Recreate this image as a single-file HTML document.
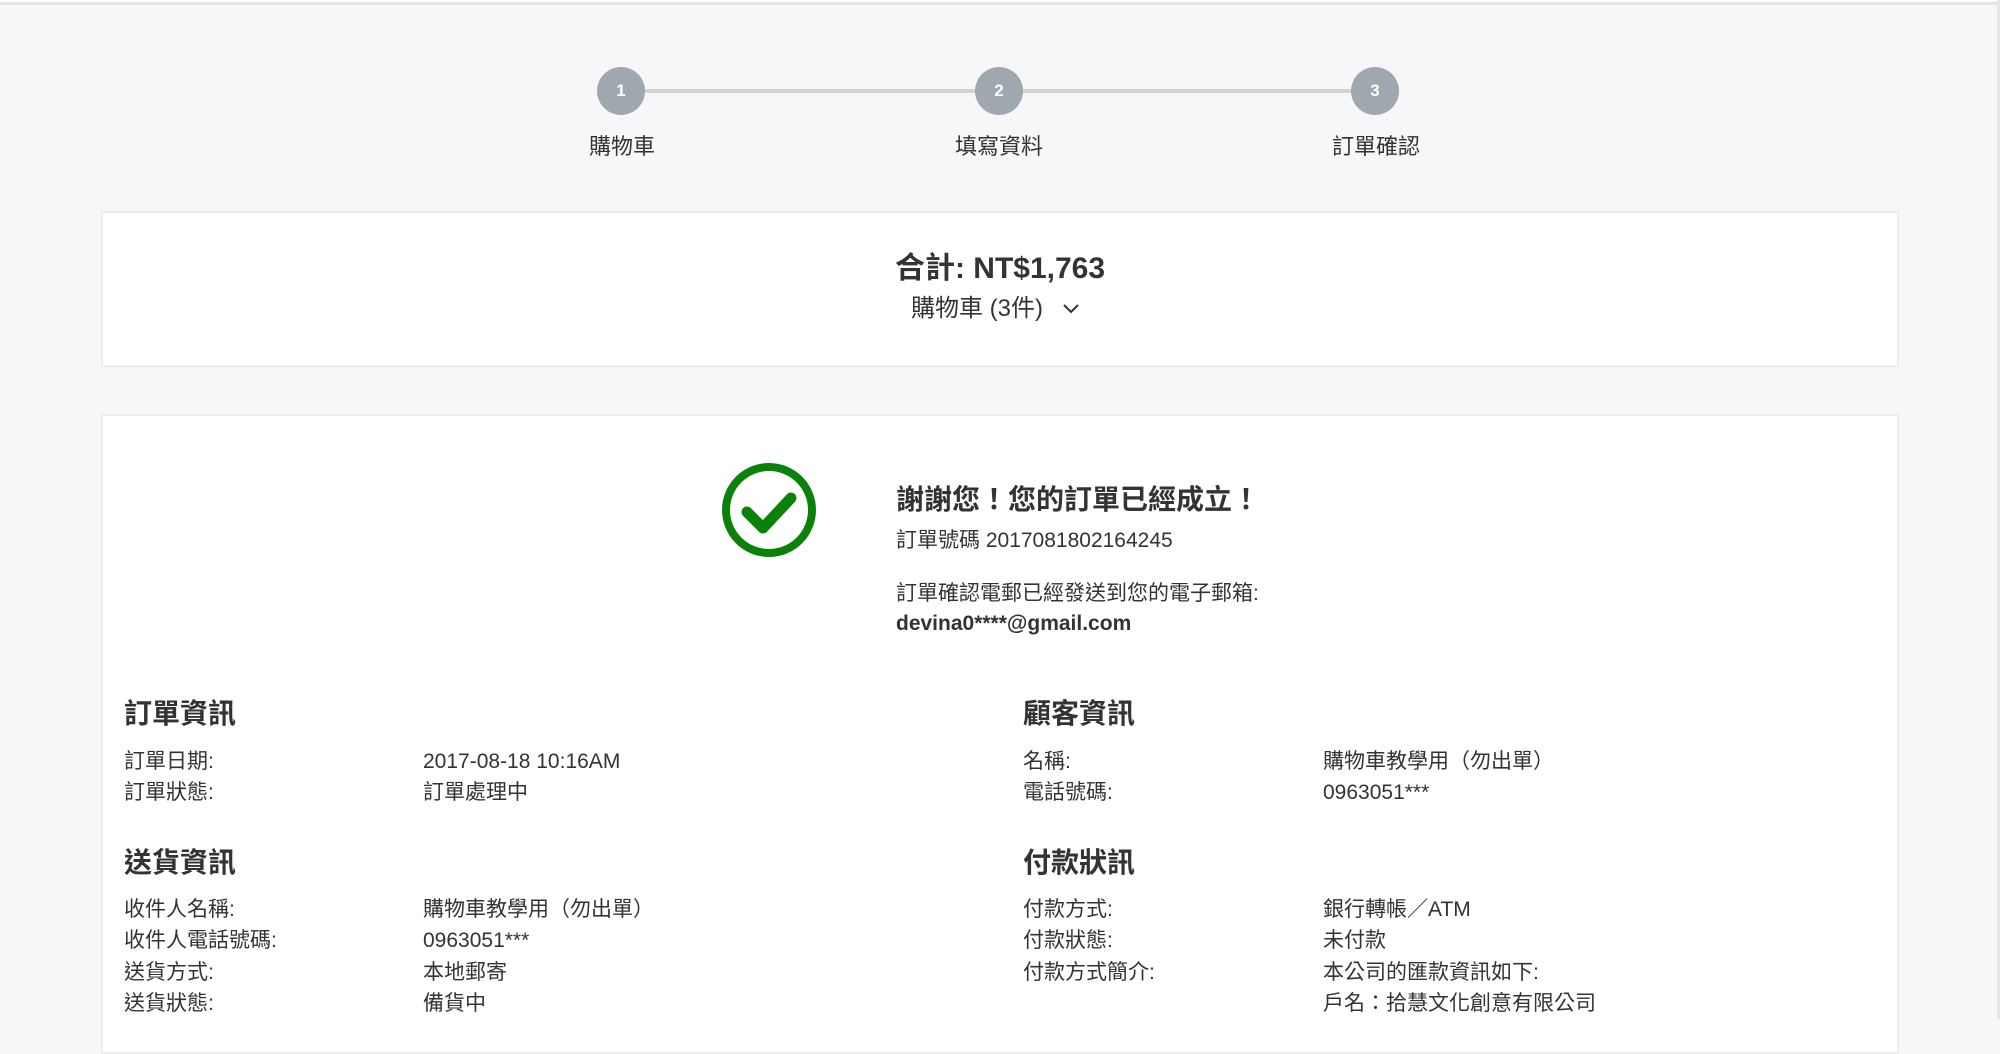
<!DOCTYPE html>
<html><head><meta charset="utf-8"><style>
*{margin:0;padding:0;box-sizing:border-box}
body{width:2000px;height:1019px;overflow:hidden;background:#f7f7f9;font-family:"Liberation Sans","Noto Sans CJK TC",sans-serif;color:#333;position:relative}
.a{position:absolute;white-space:nowrap;line-height:1}
.topl{position:absolute;left:0;top:0;width:2000px;height:5px;border-bottom:3px solid #e4e4e6;background:#fff}
.rl{position:absolute;right:0;top:0;width:3px;height:1019px;background:#e6e6e8}
.line{position:absolute;top:89px;height:4px;background:#d3d3d3}
.c{position:absolute;width:48px;height:48px;border-radius:50%;background:#9ea8ae;color:#fff;font-weight:bold;font-size:17px;text-align:center;line-height:48px;top:67px}
.lab{font-size:22px;top:136px;transform:translateX(-50%)}
.card{position:absolute;left:101px;width:1798px;background:#fff;border:2px solid #ececee}
.l{font-size:21px}
.h{font-size:28px;font-weight:bold}
</style></head><body>
<div class="topl"></div><div class="rl"></div>
<div class="line" style="left:621px;width:754px"></div>
<div class="c" style="left:597px">1</div>
<div class="c" style="left:975px">2</div>
<div class="c" style="left:1351px">3</div>
<div class="a lab" style="left:622px">購物車</div>
<div class="a lab" style="left:999px">填寫資料</div>
<div class="a lab" style="left:1376px">訂單確認</div>

<div class="card" style="top:211px;height:156px"></div>
<div class="a" style="left:0;width:2000px;text-align:center;top:254px;font-size:30px;font-weight:bold">合計: NT$1,763</div>
<div class="a" style="left:911px;top:297px;font-size:24px">購物車 (3件)</div>
<svg class="a" style="left:1062px;top:303px" width="18" height="12" viewBox="0 0 18 12"><path d="M2 2l7 7 7-7" fill="none" stroke="#333" stroke-width="2"/></svg>

<div class="card" style="top:414px;height:640px"></div>
<svg class="a" style="left:720px;top:461px" width="98" height="98" viewBox="0 0 98 98"><circle cx="49" cy="49" r="43" fill="none" stroke="#0a820a" stroke-width="8"/><path d="M27 51l16 16 28-30" fill="none" stroke="#0a820a" stroke-width="11" stroke-linecap="round" stroke-linejoin="round"/></svg>
<div class="a h" style="left:896px;top:486px">謝謝您！您的訂單已經成立！</div>
<div class="a l" style="left:896px;top:530px">訂單號碼 2017081802164245</div>
<div class="a l" style="left:896px;top:583px">訂單確認電郵已經發送到您的電子郵箱:</div>
<div class="a l" style="left:896px;top:613px;font-weight:bold">devina0****@gmail.com</div>

<div class="a h" style="left:124px;top:700px">訂單資訊</div>
<div class="a l" style="left:124px;top:751px">訂單日期:</div><div class="a l" style="left:423px;top:751px">2017-08-18 10:16AM</div>
<div class="a l" style="left:124px;top:782px">訂單狀態:</div><div class="a l" style="left:423px;top:782px">訂單處理中</div>
<div class="a h" style="left:124px;top:849px">送貨資訊</div>
<div class="a l" style="left:124px;top:899px">收件人名稱:</div><div class="a l" style="left:423px;top:899px">購物車教學用（勿出單）</div>
<div class="a l" style="left:124px;top:930px">收件人電話號碼:</div><div class="a l" style="left:423px;top:930px">0963051***</div>
<div class="a l" style="left:124px;top:962px">送貨方式:</div><div class="a l" style="left:423px;top:962px">本地郵寄</div>
<div class="a l" style="left:124px;top:993px">送貨狀態:</div><div class="a l" style="left:423px;top:993px">備貨中</div>

<div class="a h" style="left:1023px;top:700px">顧客資訊</div>
<div class="a l" style="left:1023px;top:751px">名稱:</div><div class="a l" style="left:1323px;top:751px">購物車教學用（勿出單）</div>
<div class="a l" style="left:1023px;top:782px">電話號碼:</div><div class="a l" style="left:1323px;top:782px">0963051***</div>
<div class="a h" style="left:1023px;top:849px">付款狀訊</div>
<div class="a l" style="left:1023px;top:899px">付款方式:</div><div class="a l" style="left:1323px;top:899px">銀行轉帳／ATM</div>
<div class="a l" style="left:1023px;top:930px">付款狀態:</div><div class="a l" style="left:1323px;top:930px">未付款</div>
<div class="a l" style="left:1023px;top:962px">付款方式簡介:</div><div class="a l" style="left:1323px;top:962px">本公司的匯款資訊如下:</div>
<div class="a l" style="left:1323px;top:993px">戶名：拾慧文化創意有限公司</div>
</body></html>
